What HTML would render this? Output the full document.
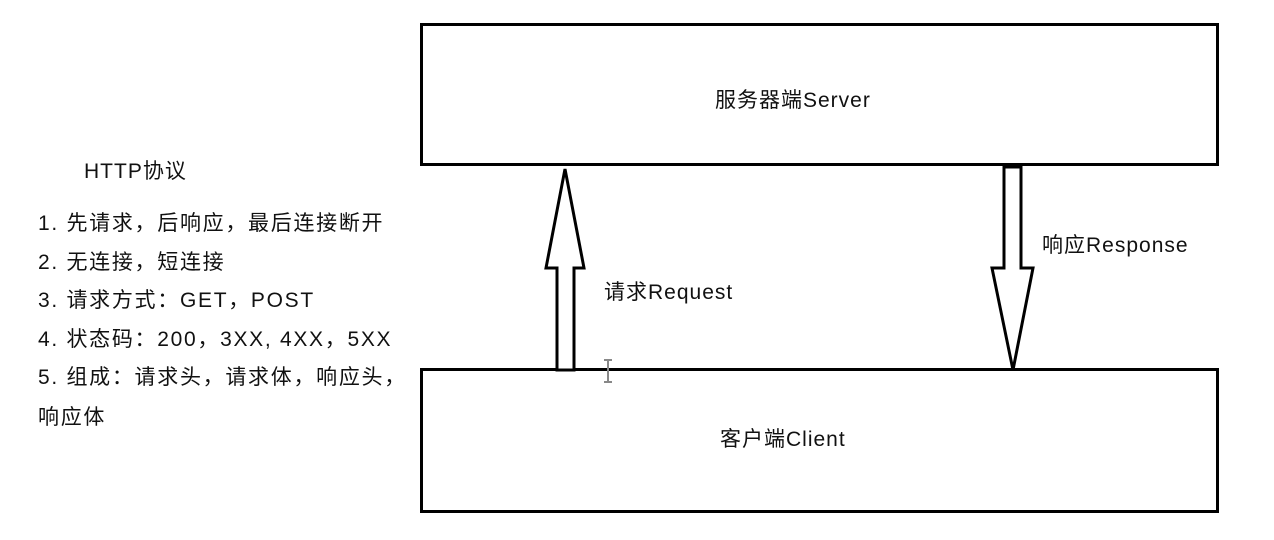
<!DOCTYPE html>
<html><head><meta charset="utf-8"><style>
body{margin:0;width:1274px;height:540px;background:#fff;position:relative;overflow:hidden;font-family:"Liberation Sans","Noto Sans CJK SC",sans-serif;color:#111}
.t{position:absolute;font-size:21px;white-space:nowrap;line-height:24px;letter-spacing:1px}
.l{letter-spacing:1.7px}
</style></head><body>
<svg width="1274" height="540" style="position:absolute;left:0;top:0">
<rect x="421.5" y="24.5" width="796" height="140" fill="none" stroke="#000" stroke-width="3"/>
<rect x="421.5" y="369.5" width="796" height="142" fill="none" stroke="#000" stroke-width="3"/>
<path d="M565 169 L584 268 L574 268 L574 370 L557 370 L557 268 L546 268 Z" fill="#fff" stroke="#000" stroke-width="3" stroke-linejoin="miter"/>
<path d="M1004 167 L1021 167 L1021 268 L1033 268 L1013 370 L992 268 L1004 268 Z" fill="#fff" stroke="#000" stroke-width="3"/>
<path d="M604 360 h8 M608 360 v22 M604 382 h8" stroke="#888" stroke-width="2" fill="none"/>
</svg>
<div class="t" style="left:715px;top:89px">服务器端Server</div>
<div class="t" style="left:720px;top:428px">客户端Client</div>
<div class="t" style="left:604px;top:281px">请求Request</div>
<div class="t" style="left:1042px;top:234px">响应Response</div>
<div class="t" style="left:84px;top:160px">HTTP协议</div>
<div class="t l" style="left:38px;top:212px">1. 先请求，后响应，最后连接断开</div>
<div class="t l" style="left:38px;top:251px">2. 无连接，短连接</div>
<div class="t l" style="left:38px;top:289px">3. 请求方式：GET，POST</div>
<div class="t l" style="left:38px;top:328px">4. 状态码：200，3XX, 4XX，5XX</div>
<div class="t l" style="left:38px;top:366px">5. 组成：请求头，请求体，响应头，</div>
<div class="t l" style="left:38px;top:406px">响应体</div>
</body></html>
